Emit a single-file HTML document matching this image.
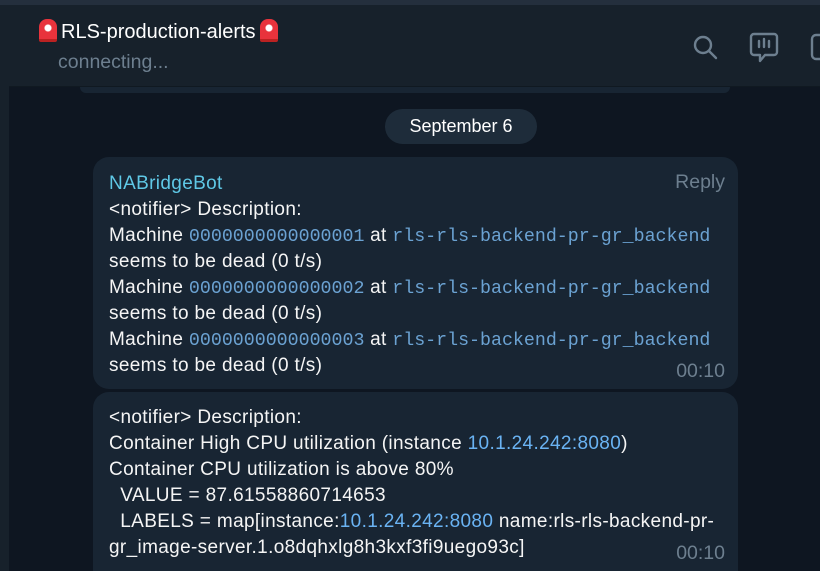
<!DOCTYPE html>
<html style="overflow:hidden;width:820px;height:571px"><head><meta charset="utf-8"><style>
*{margin:0;padding:0;box-sizing:border-box}
body{width:820px;height:571px;overflow:hidden;background:#0e1621;font-family:"Liberation Sans",sans-serif;position:relative;color:#f5f5f5}
.top{position:absolute;left:0;top:0;width:820px;height:5px;background:#242f3d}
.left{position:absolute;left:0;top:5px;width:9px;height:566px;background:#17212b}
.hdr{position:absolute;left:9px;top:5px;width:811px;height:82px;background:#17212b;border-bottom:1px solid #101921}
.title{position:absolute;left:26px;top:14px;font-size:20px;color:#fff;white-space:nowrap}
.siren{display:inline-block;width:18px;height:23px;margin:0 4px;background:radial-gradient(circle at 50% 45%,#fff 0 3px,#e8333c 4px);border-radius:8px 8px 2px 2px;vertical-align:-4px;border-bottom:3px solid #b22}
.sub{position:absolute;left:49px;top:46px;font-size:19.5px;color:#6d7f8f}
.bub{position:absolute;left:93px;width:645px;background:#182533;border-radius:16px;overflow:hidden}
.ln{position:absolute;left:16px;font-size:19px;letter-spacing:0.35px;line-height:26px;white-space:nowrap;color:#f5f5f5}
.m{font-family:"Liberation Mono",monospace;font-size:18.3px;letter-spacing:0;color:#6ba2d2}
.l{color:#6ab3f3}
.t{position:absolute;right:13px;font-size:19.5px;color:#6d7f8f}
.date{position:absolute;left:385px;top:109px;width:152px;height:35px;border-radius:18px;background:#1e2c3a;color:#fff;font-size:18px;text-align:center;line-height:35px}
</style></head><body>
<div class="top"></div><div class="left"></div>
<div style="position:absolute;left:80px;top:87px;width:650px;height:6px;background:#182533;border-radius:0 0 10px 10px"></div>
<div class="hdr">
<div class="title"><span class="siren"></span>RLS-production-alerts<span class="siren"></span></div>
<div class="sub">connecting...</div>
<svg style="position:absolute;left:682px;top:28px" width="30" height="30" viewBox="0 0 30 30" fill="none" stroke="#6d7f8f" stroke-width="2.4"><circle cx="12" cy="12" r="8"/><path d="M18 18l7 7" stroke-linecap="round"/></svg>
<svg style="position:absolute;left:740px;top:27px" width="30" height="34" viewBox="0 0 30 34" fill="none" stroke="#6d7f8f" stroke-width="2.4" stroke-linecap="round" stroke-linejoin="round"><path d="M5 2h20a3 3 0 0 1 3 3v15a3 3 0 0 1-3 3h-9l-5 6v-6H5a3 3 0 0 1-3-3V5a3 3 0 0 1 3-3z"/><path d="M10 9v6M15 7v8M20 9v6"/></svg>
<svg style="position:absolute;left:800px;top:28px" width="20" height="30" viewBox="0 0 20 30" fill="none" stroke="#6d7f8f" stroke-width="2.4"><rect x="3" y="2" width="24" height="24" rx="4"/></svg>
</div>
<div class="date">September 6</div>
<div class="bub" style="top:157px;height:232px">
<div class="ln" style="top:14px;color:#5fc8e6">NABridgeBot</div>
<div class="t" style="top:14px">Reply</div>
<div class="ln" style="top:40px">&lt;notifier&gt; Description:</div>
<div class="ln" style="top:66px">Machine <span class="m">0000000000000001</span> at <span class="m">rls-rls-backend-pr-gr_backend</span></div>
<div class="ln" style="top:92px">seems to be dead (0 t/s)</div>
<div class="ln" style="top:118px">Machine <span class="m">0000000000000002</span> at <span class="m">rls-rls-backend-pr-gr_backend</span></div>
<div class="ln" style="top:144px">seems to be dead (0 t/s)</div>
<div class="ln" style="top:170px">Machine <span class="m">0000000000000003</span> at <span class="m">rls-rls-backend-pr-gr_backend</span></div>
<div class="ln" style="top:196px">seems to be dead (0 t/s)</div>
<div class="t" style="top:203px">00:10</div>
</div>
<div class="bub" style="top:392px;height:179px;border-radius:16px 16px 0 0">
<div class="ln" style="top:13px">&lt;notifier&gt; Description:</div>
<div class="ln" style="top:39px">Container High CPU utilization (instance <span class="l">10.1.24.242:8080</span>)</div>
<div class="ln" style="top:65px">Container CPU utilization is above 80%</div>
<div class="ln" style="top:91px">&nbsp; VALUE = 87.61558860714653</div>
<div class="ln" style="top:117px">&nbsp; LABELS = map[instance:<span class="l">10.1.24.242:8080</span> name:rls-rls-backend-pr-</div>
<div class="ln" style="top:143px">gr_image-server.1.o8dqhxlg8h3kxf3fi9uego93c]</div>
<div class="t" style="top:150px">00:10</div>
</div>
</body></html>
